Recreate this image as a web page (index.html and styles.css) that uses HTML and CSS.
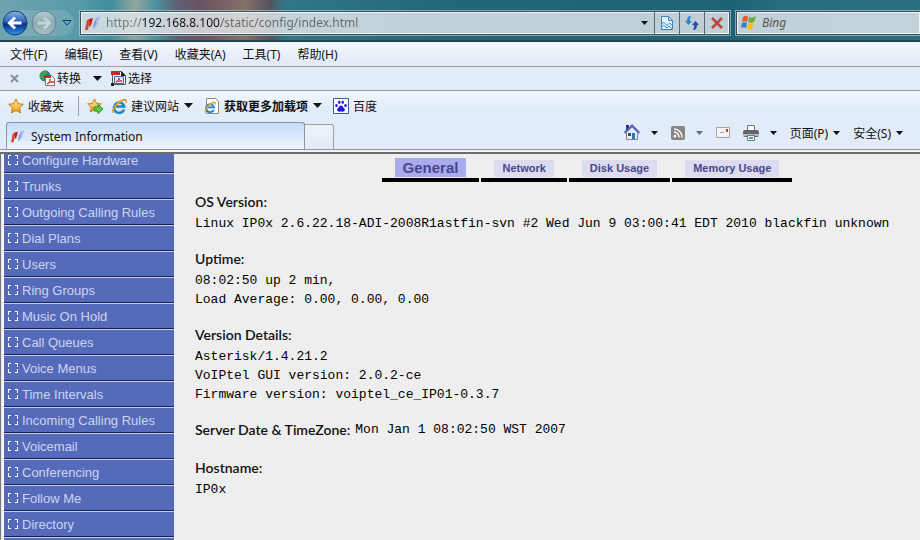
FILE: index.html
```html
<!DOCTYPE html>
<html lang="zh-CN">
<head>
    <meta charset="UTF-8">
    <meta name="viewport" content="width=device-width, initial-scale=1.0">
    <title>System Information</title>
    <link rel="stylesheet" href="styles.css">
</head>
<body>
    <svg class="defs" width="0" height="0" aria-hidden="true">
        <defs>
            <linearGradient id="blueBall" x1="0" y1="0" x2="0" y2="1">
                <stop offset="0" stop-color="#8cb4e4"/>
                <stop offset="0.45" stop-color="#2a62b8"/>
                <stop offset="0.55" stop-color="#0a2f86"/>
                <stop offset="1" stop-color="#2c9cf0"/>
            </linearGradient>
            <linearGradient id="greyBall" x1="0" y1="0" x2="0" y2="1">
                <stop offset="0" stop-color="#b9cbd1"/>
                <stop offset="0.5" stop-color="#8faab3"/>
                <stop offset="1" stop-color="#a9bfc6"/>
            </linearGradient>
            <linearGradient id="gold" x1="0" y1="0" x2="0" y2="1">
                <stop offset="0" stop-color="#fff0a0"/>
                <stop offset="1" stop-color="#f09a10"/>
            </linearGradient>
            <symbol id="caret" viewBox="0 0 9 5"><path d="M0 0h9L4.500 5z" fill="currentColor"/></symbol>
            <symbol id="site" viewBox="0 0 16 16">
                <path d="M11 3l4-2-3 9-3 4-1-1z" fill="#a9b4f0"/>
                <path d="M8 13l1-6 3-4-2 8z" fill="#8d96e4"/>
                <path d="M2 5l4-2-2 6-1 6H0z" fill="#e0402c"/>
                <path d="M5 4l3-1-2 7-2 2z" fill="#b01c14"/>
            </symbol>
            <symbol id="star" viewBox="0 0 16 16">
                <path d="M8 1l2.200 4.700 5.100.6-3.800 3.500 1 5.100L8 12.400 3.500 14.900l1-5.100L.7 6.300l5.100-.6z" fill="url(#gold)" stroke="#c07a14"/>
            </symbol>
            <symbol id="ie" viewBox="0 0 16 16">
                <path d="M13 11.500A5.200 5.200 0 1 1 13.200 8.500H4.500" fill="none" stroke="#1d86cf" stroke-width="2.600"/>
                <path d="M2 15C-1 12 7 1 14 1c2 0 2 2 1 4 0-3-2-2.500-4-1.500C6 6 2 11 2 15z" fill="#eab62e" stroke="#c48a12" stroke-width=".5"/>
            </symbol>
        </defs>
    </svg>

    <header class="nav-bar">
        <div class="history">
            <button class="icon-btn" aria-label="后退">
                <svg width="26" height="26" viewBox="0 0 26 26">
                    <circle cx="13" cy="13" r="12" fill="url(#blueBall)" stroke="#16376f"/>
                    <path d="M19.500 13H8M13 7.500L7.500 13l5.500 5.500" fill="none" stroke="#fff" stroke-width="3"/>
                </svg>
            </button>
            <button class="icon-btn" aria-label="前进">
                <svg width="26" height="26" viewBox="0 0 26 26">
                    <circle cx="13" cy="13" r="12" fill="url(#greyBall)" stroke="#5f828e"/>
                    <path d="M6.500 13H18M13 7.500l5.500 5.500-5.500 5.500" fill="none" stroke="#c3d3d8" stroke-width="3"/>
                </svg>
            </button>
            <button class="icon-btn" aria-label="最近浏览的页面">
                <svg width="10" height="6" viewBox="0 0 10 6"><path d="M1 .5h8L5 5z" fill="#5bb6ee" stroke="#0d3a63"/></svg>
            </button>
        </div>
        <div class="address">
            <svg width="16" height="16"><use href="#site"/></svg>
            <input class="address-input" type="text" aria-label="地址" value="http://192.168.8.100/static/config/index.html">
            <button class="icon-btn address-drop" aria-label="显示地址列表"><svg width="7" height="4"><use href="#caret"/></svg></button>
            <button class="icon-btn address-btn" aria-label="兼容性视图">
                <svg width="14" height="16" viewBox="0 0 14 16">
                    <path d="M1.500 1.500h7l4 4v9h-11z" fill="#e6f3fa" stroke="#3b84b4"/>
                    <path d="M8.500 1.500v4h4" fill="none" stroke="#3b84b4"/>
                    <path d="M1 10l2.500-3L7 10.500 9.500 8l3.500 3M1 13l2.500-3L7 13l2-2 3 3" fill="none" stroke="#2f8fc7"/>
                </svg>
            </button>
            <button class="icon-btn address-btn" aria-label="刷新">
                <svg width="16" height="16" viewBox="0 0 16 16">
                    <path d="M7 1C4 1 3 3 3 6H1l3.500 4L8 6H6c0-2 0-3 1-5z" fill="#2b85cc"/>
                    <path d="M9 15c3 0 4-2 4-5h2l-3.500-4L8 10h2c0 2 0 3-1 5z" fill="#1f4fa8"/>
                </svg>
            </button>
            <button class="icon-btn address-btn" aria-label="停止">
                <svg width="14" height="14" viewBox="0 0 14 14"><path d="M2 2l10 10M12 2L2 12" stroke="#bf4444" stroke-width="2.500"/></svg>
            </button>
        </div>
        <div class="search">
            <svg width="17" height="17" viewBox="0 0 17 17">
                <path d="M3 3c2-2 4-1 5 0L7 8C5 7 4 7 2 8z" fill="#e4582a"/>
                <path d="M9 3c2 1 4 1 7-1l-2 6c-2 1-4 1-6 0z" fill="#6fae35"/>
                <path d="M2 9c2-1 3-1 5 0l-1 5c-2-1-3-1-5 0z" fill="#2b80cf"/>
                <path d="M8 9c2 1 4 1 6 0l-2 6c-2 1-4 1-5 0z" fill="#f3bd22"/>
            </svg>
            <input class="search-input" type="text" aria-label="搜索" placeholder="Bing">
        </div>
    </header>

    <nav class="menu-bar">
        <button>文件(F)</button>
        <button>编辑(E)</button>
        <button>查看(V)</button>
        <button>收藏夹(A)</button>
        <button>工具(T)</button>
        <button>帮助(H)</button>
    </nav>

    <div class="convert-bar">
        <button class="icon-btn" aria-label="关闭工具栏">
            <svg width="9" height="9" viewBox="0 0 9 9"><path d="M1 1l7 7M8 1L1 8" stroke="#8c9096" stroke-width="2"/></svg>
        </button>
        <button class="convert">
            <svg width="17" height="16" viewBox="0 0 17 16">
                <circle cx="6" cy="6" r="5.500" fill="#3273b8"/>
                <path d="M1 4c3-4 6-4 8-3L7 5 4 6l2 5c-3 0-6-3-5-7z" fill="#3fa04a"/>
                <path d="M6.500 5.500h6l3 3v7h-9z" fill="#fff" stroke="#777"/>
                <path d="M5 5h7v3H5z" fill="#d82020"/>
                <path d="M8 14c2-1 3-3 3-5 0 2 1 3 4 3-3 0-5 1-7 2z" fill="none" stroke="#d82020"/>
            </svg>
            转换
        </button>
        <button class="icon-btn convert-drop" aria-label="转换选项"><svg width="9" height="5"><use href="#caret"/></svg></button>
        <button class="select">
            <svg width="16" height="16" viewBox="0 0 16 16">
                <path d="M1.500 1.500h9l4 4v9h-13z" fill="#fff" stroke="#555"/>
                <path d="M10 1v5h5z" fill="#222"/>
                <path d="M0 1h9v4H0z" fill="#d82020"/>
                <path d="M3.500 6.500h9v7h-9z" fill="#dce8fa" stroke="#3a68c0"/>
                <path d="M5 12c2-1 3-3 3-4 0 2 1 3 3 3-2 0-4 0-6 1z" fill="none" stroke="#d82020"/>
                <path d="M0 13h3v3H0z" fill="#222"/>
            </svg>
            选择
        </button>
    </div>

    <div class="favorites-bar">
        <button class="fav"><svg width="16" height="16"><use href="#star"/></svg>收藏夹</button>
        <span class="divider"></span>
        <button class="icon-btn add-fav" aria-label="添加到收藏夹栏">
            <svg width="17" height="16" viewBox="0 0 17 16">
                <use href="#star" width="15" height="15"/>
                <path d="M7 9h4V6.500l5 4.500-5 4.500V13H7z" fill="#5fca45" stroke="#2b8a22"/>
            </svg>
        </button>
        <button class="fav sites"><svg width="16" height="16"><use href="#ie"/></svg>建议网站<svg class="caret" width="9" height="5"><use href="#caret"/></svg></button>
        <button class="fav addons">
            <svg width="16" height="16" viewBox="0 0 16 16">
                <path d="M2.500.5h9l3 3v12h-12z" fill="#fff" stroke="#888"/>
                <use href="#ie" y="3" width="12" height="12"/>
            </svg>获取更多加载项<svg class="caret" width="9" height="5"><use href="#caret"/></svg>
        </button>
        <button class="fav baidu">
            <svg width="16" height="16" viewBox="0 0 16 16">
                <path d="M.5.5h15v15H.5z" fill="#fff" stroke="#2f5f9c"/>
                <g fill="#2319dc">
                    <ellipse cx="3.500" cy="7.500" rx="1.300" ry="1.600"/>
                    <ellipse cx="6.300" cy="4.200" rx="1.200" ry="1.800"/>
                    <ellipse cx="9.700" cy="4.200" rx="1.200" ry="1.800"/>
                    <ellipse cx="12.500" cy="7.500" rx="1.300" ry="1.600"/>
                    <path d="M8 7.500c1.700 0 2.200 2 3.500 3.200 1.300 1.800-.5 3.500-3.500 2.800-3 .7-4.800-1-3.500-2.800C5.800 9.500 6.300 7.500 8 7.500z"/>
                </g>
            </svg>百度
        </button>
    </div>

    <div class="tab-bar">
        <div class="window-tabs">
            <button class="window-tab"><svg width="14" height="14"><use href="#site"/></svg>System Information</button>
            <button class="new-tab" aria-label="新选项卡"></button>
        </div>
        <div class="commands">
            <button class="command" aria-label="主页">
                <svg width="16" height="17" viewBox="0 0 16 17">
                    <path d="M2 1h3v5H2z" fill="#2a2fa8"/>
                    <path d="M2.500 8.500L8 3l5.500 5.500v7h-11z" fill="#e8eef8" stroke="#7a8297"/>
                    <path d="M.5 9L8 1.500 15.500 9" fill="none" stroke="#5c69b8" stroke-width="2"/>
                    <path d="M8 9h3v6H8z" fill="#2b77b8"/>
                    <path d="M4 9h3v3H4z" fill="#454b52"/>
                </svg>
                <svg class="caret" width="7" height="4"><use href="#caret"/></svg>
            </button>
            <button class="command feeds" aria-label="源">
                <svg width="14" height="14" viewBox="0 0 14 14">
                    <rect width="14" height="14" rx="2" fill="#858585"/>
                    <circle cx="4" cy="10" r="1.500" fill="#fff"/>
                    <path d="M3 6a5 5 0 0 1 5 5.500M3 3a8 8 0 0 1 8 8.500" fill="none" stroke="#fff" stroke-width="1.500"/>
                </svg>
                <svg class="caret" width="7" height="4"><use href="#caret"/></svg>
            </button>
            <button class="command" aria-label="阅读邮件">
                <svg width="14" height="11" viewBox="0 0 14 11">
                    <path d="M.5.5h13v10H.5z" fill="#f6f3f3" stroke="#a5a3a8"/>
                    <path d="M10 2h2v3h-2z" fill="#d83a34"/>
                    <path d="M4 5.500h4" stroke="#a5a3a8"/>
                </svg>
            </button>
            <button class="command" aria-label="打印">
                <svg width="16" height="16" viewBox="0 0 16 16">
                    <path d="M4.500.5h7v6h-7z" fill="#fff" stroke="#777"/>
                    <rect y="5" width="16" height="7" rx="2" fill="#63676b"/>
                    <path d="M0 9h16v2H0z" fill="#b5babd"/>
                    <path d="M4.500 10.500h7v5h-7z" fill="#e8f4fb" stroke="#777"/>
                    <path d="M6 12h4v2H6z" fill="#4c9fc6"/>
                </svg>
                <svg class="caret" width="7" height="4"><use href="#caret"/></svg>
            </button>
            <button class="command text">页面(P)<svg class="caret" width="7" height="4"><use href="#caret"/></svg></button>
            <button class="command text">安全(S)<svg class="caret" width="7" height="4"><use href="#caret"/></svg></button>
        </div>
    </div>

    <div class="page">
        <nav class="sidebar">
            <ul>
                <li><a href="#">Configure Hardware</a></li>
                <li><a href="#">Trunks</a></li>
                <li><a href="#">Outgoing Calling Rules</a></li>
                <li><a href="#">Dial Plans</a></li>
                <li><a href="#">Users</a></li>
                <li><a href="#">Ring Groups</a></li>
                <li><a href="#">Music On Hold</a></li>
                <li><a href="#">Call Queues</a></li>
                <li><a href="#">Voice Menus</a></li>
                <li><a href="#">Time Intervals</a></li>
                <li><a href="#">Incoming Calling Rules</a></li>
                <li><a href="#">Voicemail</a></li>
                <li><a href="#">Conferencing</a></li>
                <li><a href="#">Follow Me</a></li>
                <li><a href="#">Directory</a></li>
            </ul>
        </nav>
        <main class="content">
            <nav class="tabs">
                <div class="tab active"><a href="#">General</a></div>
                <div class="tab"><a href="#">Network</a></div>
                <div class="tab"><a href="#">Disk Usage</a></div>
                <div class="tab"><a href="#">Memory Usage</a></div>
            </nav>
            <section>
                <h2>OS Version:</h2>
                <p>Linux IP0x 2.6.22.18-ADI-2008R1astfin-svn #2 Wed Jun 9 03:00:41 EDT 2010 blackfin unknown</p>
            </section>
            <section>
                <h2>Uptime:</h2>
                <p>08:02:50 up 2 min,</p>
                <p>Load Average: 0.00, 0.00, 0.00</p>
            </section>
            <section>
                <h2>Version Details:</h2>
                <p>Asterisk/1.4.21.2</p>
                <p>VoIPtel GUI version: 2.0.2-ce</p>
                <p>Firmware version: voiptel_ce_IP01-0.3.7</p>
            </section>
            <section class="inline">
                <h2>Server Date &amp; TimeZone:</h2>
                <p>Mon Jan 1 08:02:50 WST 2007</p>
            </section>
            <section>
                <h2>Hostname:</h2>
                <p>IP0x</p>
            </section>
        </main>
    </div>
</body>
</html>
```

FILE: styles.css
```css
* {
    box-sizing: border-box;
}
body {
    display: flex;
    flex-direction: column;
    height: 100vh;
    margin: 0;
    overflow: hidden;
    font-family: "Noto Sans", "Noto Sans CJK SC", sans-serif;
    font-size: 12px;
    color: #111;
    background-color: #eee;
}
button {
    display: flex;
    align-items: center;
    flex-shrink: 0;
    padding: 0;
    border: none;
    background: none;
    font: inherit;
    color: inherit;
    white-space: nowrap;
    cursor: pointer;
}
svg {
    display: block;
    flex-shrink: 0;
}
.defs {
    position: absolute;
}
.icon-btn {
    justify-content: center;
}

/* address bar */
.nav-bar {
    display: flex;
    align-items: center;
    gap: 6px;
    height: 42px;
    flex-shrink: 0;
    padding: 5px 0 0 2px;
    border-bottom: 2px solid #23424c;
    background: linear-gradient(90deg, #6fa3ae 0, #579aa8 80px, #3f8d9e 110px, #93a59c 135px, #4b93a0 155px, #5f6073 178px, #6c5161 200px, #86706a 245px, #54545f 270px, #317689 285px, #236579 50%, #1f6175 80%, #286b7d 84%, #2a6f80 100%);
}
.history {
    display: flex;
    align-items: center;
    gap: 3px;
    width: 72px;
    flex-shrink: 0;
    border-radius: 14px;
    background-color: rgba(190, 215, 222, 0.2);
}
.history .icon-btn:last-child {
    margin-left: 2px;
}
.address, .search {
    display: flex;
    align-items: center;
    height: 24px;
    border: 1px solid #38535c;
    outline: 1px solid rgba(190, 215, 222, 0.6);
    box-shadow: inset 0 0 0 1px #eef5f6;
    background-color: rgba(228, 232, 235, 0.82);
}
.address {
    flex: 1;
    padding-left: 4px;
}
.address-input, .search-input {
    flex: 1;
    min-width: 0;
    padding: 0;
    border: none;
    outline: none;
    background: none;
    font-family: "Noto Sans", sans-serif;
    font-size: 12px;
}
/* host part of the address is darker than the rest */
.address-input {
    margin-left: 5px;
    background: linear-gradient(90deg, #777 36px, #111 36px, #111 115px, #666 115px);
    -webkit-background-clip: text;
    background-clip: text;
    color: transparent;
}
.address-drop {
    width: 19px;
    height: 22px;
}
.address-btn {
    width: 25px;
    height: 22px;
    border-left: 1px solid #4f6a73;
}
.search {
    width: 184px;
    flex-shrink: 0;
    gap: 5px;
    padding-left: 3px;
    border-right: none;
}
.search-input::placeholder {
    font-style: italic;
    color: #555;
}

/* menus and toolbars */
.menu-bar {
    display: flex;
    align-items: center;
    gap: 17px;
    height: 25px;
    flex-shrink: 0;
    padding-left: 10px;
    border-bottom: 1px solid #999fa8;
    background: linear-gradient(#f4f7fd, #e0e9f6);
}
.convert-bar {
    display: flex;
    align-items: center;
    height: 24px;
    flex-shrink: 0;
    padding: 0 0 1px 10px;
    border-bottom: 1px solid #8f959d;
    background-color: #e1ecf8;
}
.convert, .select {
    gap: 1px;
}
.convert {
    margin-left: 20px;
}
.convert-drop {
    margin: 0 9px 0 12px;
}
.favorites-bar {
    display: flex;
    align-items: center;
    height: 31px;
    flex-shrink: 0;
    padding: 0 0 2px 8px;
    background: linear-gradient(#f3f7fd, #e1ecf8 60%);
}
.fav {
    gap: 4px;
}
.fav .caret {
    margin-left: 1px;
}
.divider {
    width: 1px;
    height: 20px;
    margin: 0 8px 0 14px;
    background-color: #9aa0a8;
}
.add-fav {
    margin-right: 7px;
}
.sites, .addons {
    margin-right: 11px;
}
.addons {
    font-weight: bold;
}
.tab-bar {
    display: flex;
    justify-content: space-between;
    height: 28px;
    flex-shrink: 0;
    padding-left: 6px;
    border-bottom: 1px solid #8b93a0;
    background-color: #e1ecf8;
}
.window-tabs {
    display: flex;
    align-items: flex-end;
}
.window-tab {
    gap: 6px;
    width: 299px;
    height: 27px;
    padding-left: 4px;
    border: 1px solid #8b93a0;
    border-bottom: none;
    border-radius: 3px 3px 0 0;
    background: linear-gradient(#c4dcf8, #eef5fd);
}
.new-tab {
    width: 29px;
    height: 25px;
    border: 1px solid #9aa1ab;
    border-left: none;
    border-bottom: none;
    border-radius: 0 3px 0 0;
    background: linear-gradient(#eef3fa, #e1ecf8);
}
.commands {
    display: flex;
    align-items: center;
    gap: 13px;
    margin-right: 17px;
    padding-bottom: 6px;
}
.command {
    gap: 11px;
}
.command.text {
    gap: 5px;
}
.feeds .caret {
    color: #66707c;
}

/* page */
.page {
    display: flex;
    flex: 1;
    min-height: 0;
    margin-top: 2px;
    padding-left: 2px;
    border-top: 2px solid #6c6c6c;
    border-left: 1px solid #777;
    background-color: #eee;
    box-shadow: 0 -2px 0 #f0f5fb;
}
.sidebar {
    width: 171px;
    flex-shrink: 0;
    overflow: hidden;
    border-left: 1px solid #fff;
    background-color: #556ab8;
}
/* list is scrolled slightly, first entry starts above the frame */
.sidebar ul {
    margin: -7px 0 0;
    padding: 0;
    border-bottom: 1px solid #c5cdf0;
    list-style: none;
}
.sidebar a {
    display: flex;
    align-items: center;
    gap: 4px;
    height: 26px;
    padding-left: 4px;
    border-top: 1px solid #c5cdf0;
    border-bottom: 1px solid #17204f;
    font-family: "Liberation Sans", Arial, sans-serif;
    font-size: 13px;
    color: #cdd5f5;
    text-decoration: none;
}
.sidebar a::before {
    content: "";
    width: 10px;
    height: 10px;
    background:
        linear-gradient(90deg, #fff 3px, transparent 3px, transparent 7px, #fff 7px) top / 10px 1px no-repeat,
        linear-gradient(90deg, #fff 3px, transparent 3px, transparent 7px, #fff 7px) bottom / 10px 1px no-repeat,
        linear-gradient(#fff 4px, transparent 4px, transparent 6px, #fff 6px) left / 1px 10px no-repeat,
        linear-gradient(#fff 4px, transparent 4px, transparent 6px, #fff 6px) right / 1px 10px no-repeat;
}
.content {
    flex: 1;
    min-width: 0;
    padding: 4px 0 0 21px;
}
.tabs {
    display: flex;
    justify-content: center;
    align-items: flex-end;
    gap: 2px;
    margin-bottom: 10px;
    padding-left: 59px;
}
.tab {
    padding: 0 13px 1px;
    border-bottom: 4px solid #000;
}
.tab a {
    display: block;
    padding: 0 8px;
    background-color: #dcdcee;
    font-family: "Liberation Sans", Arial, sans-serif;
    font-size: 11px;
    font-weight: bold;
    line-height: 17px;
    color: #47478c;
    text-decoration: none;
}
.tab.active a {
    background-color: #aaaaec;
    font-size: 15px;
    line-height: 19px;
}
section {
    margin-bottom: 16px;
}
section h2 {
    margin: 0 0 3px;
    font-family: Lato, sans-serif;
    font-size: 14px;
    font-weight: 600;
    line-height: 19px;
}
section p {
    margin: 0;
    font-family: "Liberation Mono", "Courier New", monospace;
    font-size: 13px;
    line-height: 19px;
    color: #000;
    white-space: nowrap;
}
.inline {
    display: flex;
    align-items: center;
    gap: 5px;
    margin-bottom: 19px;
}
.inline h2 {
    margin: 0;
}
```
